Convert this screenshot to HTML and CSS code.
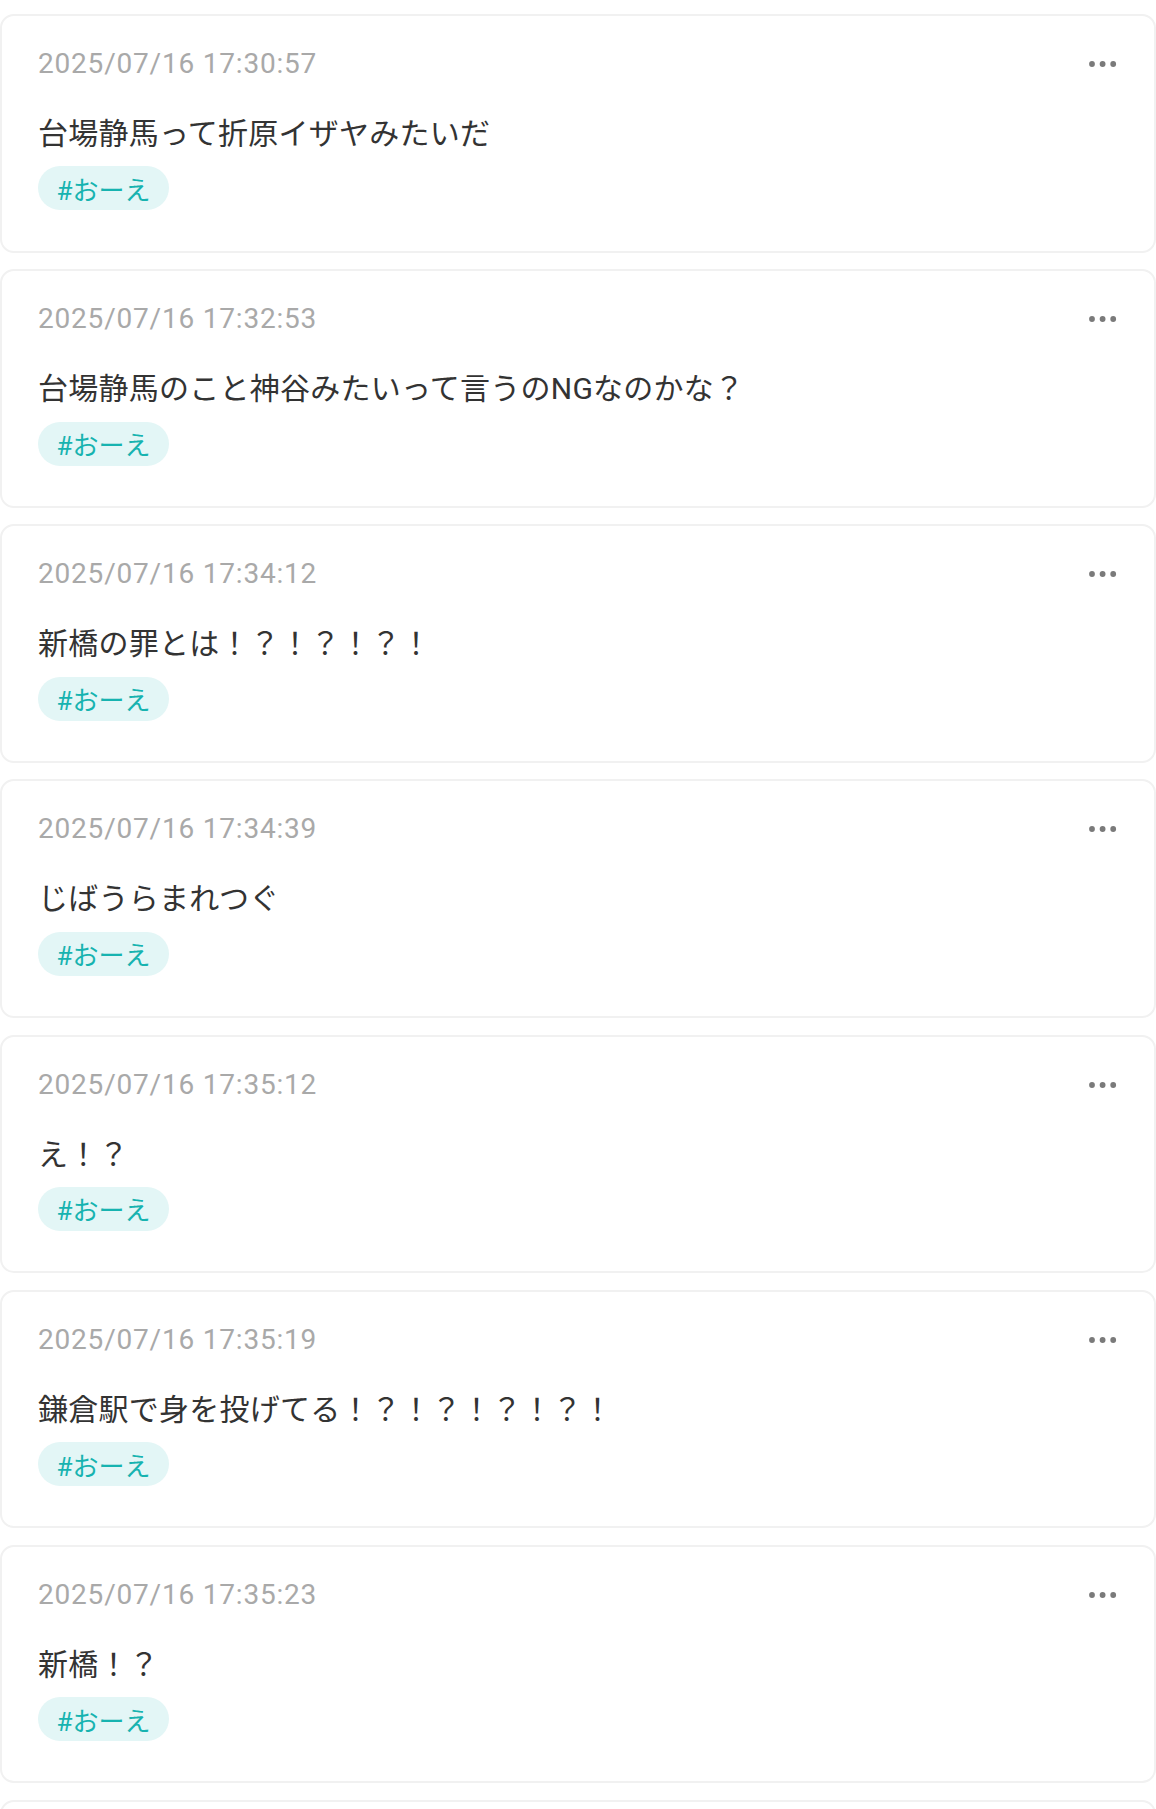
FILE: index.html
```html
<!DOCTYPE html>
<html lang="ja">
<head>
<meta charset="utf-8">
<title>posts</title>
<link rel="stylesheet" href="styles.css">
</head>
<body>
<main class="list">
  <article class="card">
    <div class="card-head">
      <time class="stamp">2025/07/16 17:30:57</time>
      <button class="more" aria-label="more"><svg width="28" height="6" viewBox="0 0 28 6"><circle cx="3" cy="3" r="2.9"/><circle cx="13.6" cy="3" r="2.9"/><circle cx="24.2" cy="3" r="2.9"/></svg></button>
    </div>
    <p class="body">台場静馬って折原イザヤみたいだ</p>
    <div class="tags"><span class="tag">#おーえ</span></div>
  </article>
  <article class="card">
    <div class="card-head">
      <time class="stamp">2025/07/16 17:32:53</time>
      <button class="more" aria-label="more"><svg width="28" height="6" viewBox="0 0 28 6"><circle cx="3" cy="3" r="2.9"/><circle cx="13.6" cy="3" r="2.9"/><circle cx="24.2" cy="3" r="2.9"/></svg></button>
    </div>
    <p class="body">台場静馬のこと神谷みたいって言うのNGなのかな？</p>
    <div class="tags"><span class="tag">#おーえ</span></div>
  </article>
  <article class="card">
    <div class="card-head">
      <time class="stamp">2025/07/16 17:34:12</time>
      <button class="more" aria-label="more"><svg width="28" height="6" viewBox="0 0 28 6"><circle cx="3" cy="3" r="2.9"/><circle cx="13.6" cy="3" r="2.9"/><circle cx="24.2" cy="3" r="2.9"/></svg></button>
    </div>
    <p class="body">新橋の罪とは！？！？！？！</p>
    <div class="tags"><span class="tag">#おーえ</span></div>
  </article>
  <article class="card">
    <div class="card-head">
      <time class="stamp">2025/07/16 17:34:39</time>
      <button class="more" aria-label="more"><svg width="28" height="6" viewBox="0 0 28 6"><circle cx="3" cy="3" r="2.9"/><circle cx="13.6" cy="3" r="2.9"/><circle cx="24.2" cy="3" r="2.9"/></svg></button>
    </div>
    <p class="body">じばうらまれつぐ</p>
    <div class="tags"><span class="tag">#おーえ</span></div>
  </article>
  <article class="card">
    <div class="card-head">
      <time class="stamp">2025/07/16 17:35:12</time>
      <button class="more" aria-label="more"><svg width="28" height="6" viewBox="0 0 28 6"><circle cx="3" cy="3" r="2.9"/><circle cx="13.6" cy="3" r="2.9"/><circle cx="24.2" cy="3" r="2.9"/></svg></button>
    </div>
    <p class="body">え！？</p>
    <div class="tags"><span class="tag">#おーえ</span></div>
  </article>
  <article class="card">
    <div class="card-head">
      <time class="stamp">2025/07/16 17:35:19</time>
      <button class="more" aria-label="more"><svg width="28" height="6" viewBox="0 0 28 6"><circle cx="3" cy="3" r="2.9"/><circle cx="13.6" cy="3" r="2.9"/><circle cx="24.2" cy="3" r="2.9"/></svg></button>
    </div>
    <p class="body">鎌倉駅で身を投げてる！？！？！？！？！</p>
    <div class="tags"><span class="tag">#おーえ</span></div>
  </article>
  <article class="card">
    <div class="card-head">
      <time class="stamp">2025/07/16 17:35:23</time>
      <button class="more" aria-label="more"><svg width="28" height="6" viewBox="0 0 28 6"><circle cx="3" cy="3" r="2.9"/><circle cx="13.6" cy="3" r="2.9"/><circle cx="24.2" cy="3" r="2.9"/></svg></button>
    </div>
    <p class="body">新橋！？</p>
    <div class="tags"><span class="tag">#おーえ</span></div>
  </article>
  <article class="card card-last"></article>
</main>
</body>
</html>
```
FILE: styles.css
```css
html, body {
  margin: 0;
  padding: 0;
  background: #ffffff;
}
body {
  font-family: Roboto, "Noto Sans CJK JP", sans-serif;
  color: #333333;
}
.list {
  display: flex;
  flex-direction: column;
  gap: 16.64px;
  padding-top: 14px;
}
.card {
  box-sizing: border-box;
  height: 238.5px;
  flex-shrink: 0;
  border: 2px solid #f1f1f1;
  border-radius: 14px;
  background: #ffffff;
  padding: 28px 37.5px 0 36px;
  display: flex;
  flex-direction: column;
}
.card-head {
  display: flex;
  align-items: center;
  justify-content: space-between;
  height: 40px;
}
.stamp {
  font-family: Roboto, sans-serif;
  font-size: 28px;
  letter-spacing: 0.8px;
  line-height: 40px;
  color: #a9a9a9;
}
.more {
  border: 0;
  padding: 0;
  margin: 0;
  background: none;
  display: flex;
  align-items: center;
  fill: #7a7a7a;
}
.more svg {
  display: block;
}
.body {
  margin: 27px 0 0;
  font-family: Roboto, "Noto Sans CJK JP", sans-serif;
  font-size: 30px;
  letter-spacing: 0.25px;
  line-height: 45px;
  color: #333333;
}
.tags {
  display: flex;
  margin-top: 10.4px;
}
.tag {
  display: inline-flex;
  align-items: center;
  height: 44px;
  padding: 0 18.5px;
  border-radius: 22px;
  background: #e3f6f6;
  color: #17b3b0;
  font-family: Roboto, "Noto Sans CJK JP", sans-serif;
  font-size: 26px;
}
```
